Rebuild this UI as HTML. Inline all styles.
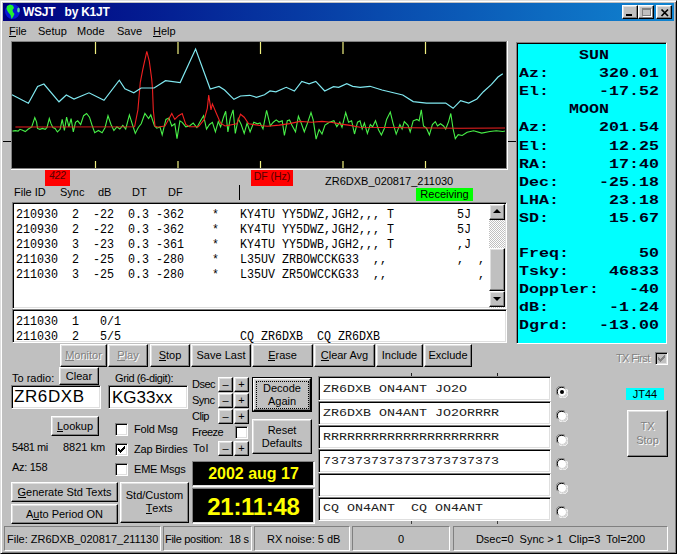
<!DOCTYPE html>
<html><head><meta charset="utf-8"><style>
*{box-sizing:border-box}
html,body{margin:0;padding:0}
body{width:677px;height:554px;overflow:hidden;background:#c0c0c0;font-family:"Liberation Sans",sans-serif;font-size:11px;color:#000;position:relative}
.a{position:absolute;white-space:pre}
.bt{position:absolute;background:#c0c0c0;border:1px solid;border-color:#fff #000 #000 #fff;box-shadow:inset -1px -1px #808080,inset 1px 1px #dfdfdf;text-align:center;white-space:pre;line-height:13px}
.sk{position:absolute;background:#fff;border:1px solid;border-color:#808080 #fff #fff #808080;box-shadow:inset 1px 1px #000,inset -1px -1px #dfdfdf}
.dis{color:#808080;text-shadow:1px 1px #fff}
.mono{font-family:"Liberation Mono",monospace}
u{text-decoration:none;border-bottom:1px solid currentColor;line-height:10px;display:inline-block}
.cb{position:absolute;width:13px;height:13px;background:#fff;border:1px solid;border-color:#808080 #fff #fff #808080;box-shadow:inset 1px 1px #000,inset -1px -1px #dfdfdf}
.sp{position:absolute;border:1px solid;border-color:#808080 #fff #fff #808080;line-height:24px;padding-left:4px;white-space:pre}
</style></head><body>
<!-- window frame -->
<div class="a" style="left:0;top:0;width:677px;height:554px;border:1px solid;border-color:#dfdfdf #000 #000 #dfdfdf;box-shadow:inset 1px 1px #fff,inset -1px -1px #808080"></div>
<!-- title bar -->
<div class="a" style="left:3px;top:3px;width:671px;height:18px;background:linear-gradient(to right,#000080,#1084d0)"></div>
<svg class="a" style="left:5px;top:4px" width="16" height="16" viewBox="0 0 16 16">
<circle cx="7.5" cy="7.5" r="7.5" fill="#0818d8"/>
<path d="M2 2 L5 0.5 L8 1.5 L9 4 L7.5 6 L8 8 L9.5 10 L8 13 L6.5 15 L5.5 11 L3 8 L1.5 5 Z" fill="#20f030"/>
<ellipse cx="13.5" cy="6" rx="1.3" ry="2.6" fill="#60d8a0"/>
</svg>
<div class="a" style="left:23px;top:5px;font-weight:bold;font-size:12px;line-height:15px;color:#fff;letter-spacing:-0.25px">WSJT   by K1JT</div>
<div class="bt" style="left:622px;top:5px;width:16px;height:14px"><div class="a" style="left:3px;top:8px;width:6px;height:2px;background:#000"></div></div>
<div class="bt" style="left:638px;top:5px;width:16px;height:14px"><div class="a" style="left:3px;top:2px;width:9px;height:8px;border:1px solid #808080;border-top-width:2px;box-shadow:1px 1px #fff"></div></div>
<div class="bt" style="left:656px;top:5px;width:16px;height:14px"><svg class="a" style="left:2px;top:2px" width="11" height="9"><path d="M2.5 1.5L9 8M9 1.5L2.5 8" stroke="#000" stroke-width="1.7"/></svg></div>
<!-- menu -->
<div class="a" style="left:9px;top:25px;line-height:13px"><u>F</u>ile</div>
<div class="a" style="left:38px;top:25px;line-height:13px">Setup</div>
<div class="a" style="left:77px;top:25px;line-height:13px">Mode</div>
<div class="a" style="left:117px;top:25px;line-height:13px">Save</div>
<div class="a" style="left:153px;top:25px;line-height:13px"><u>H</u>elp</div>
<!-- plot -->
<svg class="a" style="left:11px;top:41px" width="497" height="129" viewBox="11 41 497 129">
<rect x="11" y="41" width="497" height="129" fill="#fff"/>
<rect x="11" y="41" width="496" height="128" fill="#808080"/>
<rect x="12" y="42" width="494" height="126" fill="#000"/>
<g stroke="#f0f080" stroke-width="1.2">
<path d="M95.5 42v12M178 42v12M260.5 42v12M343 42v12M425.5 42v12M95.5 161v7M178 161v7M260.5 161v7M343 161v7M425.5 161v7"/>
</g>
<polyline fill="none" stroke="#48f048" stroke-width="1.1" points="12.5,131.1 15.4,130.6 18.1,131.1 19.9,129.3 22.6,130.2 25.3,131.6 28.0,129.3 31.7,127.0 34.8,117.6 36.6,122.1 37.5,128.4 39.8,129.3 42.5,128.4 45.2,129.3 47.0,127.5 49.3,118.5 51.1,123.9 52.9,127.5 55.1,128.4 57.4,132.0 60.1,129.3 62.2,119.4 64.4,130.5 66.6,117.2 68.9,126.8 71.1,118.6 73.3,131.9 75.5,122.3 77.7,120.8 80.7,124.5 83.6,115.7 86.6,113.5 89.5,117.2 91.8,124.5 94.7,132.7 98.4,130.5 102.1,132.7 105.1,127.5 108.0,115.7 111.0,124.5 113.9,130.5 116.9,126.8 119.8,129.0 122.8,125.3 125.7,129.0 129.4,114.9 132.4,124.5 135.3,133.4 138.3,127.5 141.2,123.8 144.9,113.5 148.6,118.6 150.8,114.9 154.5,126.0 156.8,128.2 160.0,127.0 162.2,134.9 165.9,119.4 168.9,117.9 171.8,126.0 174.8,123.8 177.0,138.6 179.9,120.8 182.2,122.3 185.8,126.8 189.5,126.0 193.2,123.1 196.9,127.5 200.6,120.8 203.6,115.7 206.5,129.0 209.5,124.5 212.4,122.3 215.4,131.9 218.3,121.6 220.6,126.8 223.5,117.2 225.7,111.2 227.9,131.9 230.2,118.6 233.1,109.8 235.3,133.4 238.3,118.6 241.2,124.5 244.2,133.4 247.1,123.1 250.1,131.9 253.8,122.3 257.5,123.8 260.0,123.0 263.0,128.8 266.6,110.3 270.3,125.9 273.3,122.2 276.2,119.9 279.0,122.0 282.2,120.7 284.4,135.5 287.3,120.7 289.5,120.0 291.8,125.1 295.5,131.8 298.4,116.2 301.4,123.6 304.3,131.8 307.3,123.6 311.0,112.6 313.2,119.9 316.1,139.1 319.1,129.5 322.0,134.0 325.0,125.1 329.4,122.2 333.9,120.7 336.8,126.6 339.8,122.2 342.0,127.3 345.7,112.6 348.6,122.2 351.6,120.7 354.5,134.0 357.5,122.2 360.0,120.8 362.2,129.0 364.4,123.1 367.4,133.4 370.3,124.5 372.6,126.8 375.5,120.8 378.5,129.7 381.4,134.9 384.4,128.2 386.6,119.4 390.3,112.0 393.2,123.8 396.2,134.1 399.9,124.5 402.1,129.0 404.3,121.6 408.0,125.3 410.2,131.9 413.2,120.8 416.9,119.4 419.1,120.8 421.3,109.8 423.5,126.0 426.5,128.2 429.4,134.9 432.4,124.5 435.3,121.6 437.5,126.0 440.5,123.8 443.5,126.0 445.7,129.0 448.6,121.6 450.8,113.5 453.1,129.0 455.3,138.6 458.2,134.7 462.2,135.5 467.1,132.3 473.6,130.7 481.7,133.1 489.9,131.5 496.3,130.7 502.8,131.5 505.0,131.0"/>
<polyline fill="none" stroke="#f02020" stroke-width="1.1" points="15.4,127.0 134.6,126.8 137.9,109.9 140.3,82.3 142.8,69.3 146.8,51.4 149.3,61.1 151.7,79.0 152.5,88.8 153.3,110.0 155.0,126.2 157.5,127.0 160.0,126.8 165.0,126.0 171.8,113.5 174.8,119.4 178.5,115.7 182.2,113.5 185.8,124.5 189.5,126.8 198.4,126.8 204.3,119.4 207.3,108.3 208.7,95.0 211.0,109.8 212.4,103.9 216.1,112.7 220.6,123.1 225.0,126.0 236.8,123.8 240.5,114.2 244.2,117.2 248.6,123.8 260.0,125.5 267.4,126.3 279.2,125.1 289.5,123.6 299.9,121.4 311.7,122.2 322.0,121.4 330.9,122.2 342.7,124.4 348.6,125.1 360.0,127.3 460.0,128.2 505.0,128.0"/>
<polyline fill="none" stroke="#80e8f0" stroke-width="1.2" points="12.0,94.8 28.4,103.2 37.6,86.5 43.9,84.0 59.0,101.8 66.3,95.0 74.0,99.0 89.0,92.8 104.0,100.3 119.3,80.2 124.9,88.8 133.8,92.8 141.1,88.0 154.1,88.0 165.5,80.7 180.2,82.6 195.6,49.0 210.2,89.0 219.0,86.5 224.6,90.0 233.9,99.3 240.5,96.0 249.8,95.3 256.5,97.3 264.5,94.7 270.0,91.0 275.9,91.8 286.2,87.3 294.4,91.0 301.8,81.4 309.1,83.9 315.8,81.4 324.7,91.0 333.5,86.6 338.7,87.3 346.8,83.6 352.7,86.3 360.1,87.3 370.0,86.3 382.0,90.0 402.8,95.0 413.2,101.6 426.5,103.1 445.7,103.1 453.1,108.3 460.6,100.6 468.7,103.0 476.9,99.0 483.4,91.7 491.5,84.4 498.0,77.0 502.8,73.8"/>
</svg>
<div class="a" style="left:3px;top:141px;width:8px;height:1px;background:#000"></div>
<div class="a" style="left:508px;top:141px;width:8px;height:1px;background:#000"></div>
<!-- labels under plot -->
<div class="a" style="left:45px;top:170px;width:25px;height:16px;background:#ff0000;color:#500;text-align:center;line-height:11px;font-size:10px;font-style:italic">422</div>
<div class="a" style="left:251px;top:170px;width:42px;height:16px;background:#ff0000;color:#500;text-align:center;line-height:12px;font-size:10.5px">DF (Hz)</div>
<div class="a" style="left:325px;top:175px;line-height:13px">ZR6DXB_020817_211030</div>
<div class="a" style="left:416px;top:188px;width:57px;height:13px;background:#00ff00;text-align:center;line-height:13px">Receiving</div>
<div class="a" style="left:14px;top:186px;line-height:13px">File ID</div>
<div class="a" style="left:60px;top:186px;line-height:13px">Sync</div>
<div class="a" style="left:98px;top:186px;line-height:13px">dB</div>
<div class="a" style="left:132px;top:186px;line-height:13px">DT</div>
<div class="a" style="left:168px;top:186px;line-height:13px">DF</div>
<div class="a" style="left:239px;top:185px;width:1px;height:15px;background:#000"></div>
<!-- listbox 1 -->
<div class="sk" style="left:12px;top:202px;width:495px;height:107px"></div>
<div class="a mono" style="left:16px;top:208px;font-size:12.5px;line-height:15px;transform:scaleX(0.93333);transform-origin:0 0">210930  2  -22  0.3 -362    *   KY4TU YY5DWZ,JGH2,,, T         5J
210930  2  -22  0.3 -362    *   KY4TU YY5DWZ,JGH2,,, T         5J
210930  3  -23  0.3 -361    *   KY4TU YY5DWB,JGH2,,, T         ,J
211030  2  -25  0.3 -280    *   L35UV ZRBOWCCKG33  ,,          ,  ,
211030  3  -25  0.3 -280    *   L35UV ZR5OWCCKG33  ,,             ,</div>
<!-- scrollbar -->
<div class="a" style="left:489px;top:204px;width:16px;height:104px;background:repeating-conic-gradient(#c0c0c0 0 25%,#fff 0 50%) 0 0/2px 2px"></div>
<div class="bt" style="left:489px;top:204px;width:16px;height:16px"><div class="a" style="left:3px;top:4px;width:0;height:0;border-left:4px solid transparent;border-right:4px solid transparent;border-bottom:4px solid #000"></div></div>
<div class="bt" style="left:489px;top:248px;width:16px;height:43px"></div>
<div class="bt" style="left:489px;top:291px;width:16px;height:16px"><div class="a" style="left:3px;top:5px;width:0;height:0;border-left:4px solid transparent;border-right:4px solid transparent;border-top:4px solid #000"></div></div>
<!-- listbox 2 -->
<div class="sk" style="left:12px;top:309px;width:495px;height:34px"></div>
<div class="a mono" style="left:16px;top:315px;font-size:12.5px;line-height:15px;transform:scaleX(0.93333);transform-origin:0 0">211030  1   0/1
211030  2   5/5                 CQ ZR6DXB  CQ ZR6DXB</div>
<!-- cyan panel -->
<div class="a" style="left:516px;top:42px;width:151px;height:302px;background:#00ffff;border:1px solid;border-color:#808080 #fff #fff #808080;box-shadow:inset 1px 1px #000"></div>
<div class="a mono" style="left:519px;top:47px;font-size:16.667px;letter-spacing:0;line-height:21.95px;font-weight:bold;color:#000018;transform:scaleY(0.82);transform-origin:0 0">      SUN
Az:     320.01
El:     -17.52
     MOON
Az:     201.54
El:      12.25
RA:      17:40
Dec:    -25.18
LHA:     23.18
SD:      15.67

Freq:       50
Tsky:    46833
Doppler:   -40
dB:      -1.24
Dgrd:   -13.00</div>
<!-- button row -->
<div class="bt dis" style="left:60px;top:344px;width:47px;height:23px;line-height:21px"><u>M</u>onitor</div>
<div class="bt dis" style="left:108px;top:344px;width:40px;height:23px;line-height:21px"><u>P</u>lay</div>
<div class="bt" style="left:150px;top:344px;width:40px;height:23px;line-height:21px"><u>S</u>top</div>
<div class="bt" style="left:191px;top:344px;width:60px;height:23px;line-height:21px">Save Last</div>
<div class="bt" style="left:252px;top:344px;width:61px;height:23px;line-height:21px"><u>E</u>rase</div>
<div class="bt" style="left:314px;top:344px;width:61px;height:23px;line-height:21px"><u>C</u>lear Avg</div>
<div class="bt" style="left:376px;top:344px;width:47px;height:23px;line-height:21px">Include</div>
<div class="bt" style="left:424px;top:344px;width:48px;height:23px;line-height:21px">Exclude</div>
<!-- TX first -->
<div class="a dis" style="left:616px;top:352px;line-height:13px;letter-spacing:-0.6px">TX First</div>
<div class="cb" style="left:655px;top:352px;background:#c0c0c0"><svg class="a" style="left:2px;top:2px" width="7" height="7" shape-rendering="crispEdges"><path d="M0 2h1v3h-1zM1 3h1v3h-1zM2 4h1v3h-1zM3 3h1v3h-1zM4 2h1v3h-1zM5 1h1v3h-1zM6 0h1v3h-1z" fill="#808080"/></svg></div>
<!-- To radio -->
<div class="a" style="left:12px;top:372px;line-height:13px">To radio:</div>
<div class="bt" style="left:59px;top:367px;width:40px;height:18px;line-height:16px">Clear</div>
<div class="sk" style="left:11px;top:385px;width:90px;height:24px"></div>
<div class="a" style="left:14px;top:387px;font-size:17px;line-height:20px;letter-spacing:0.6px">ZR6DXB</div>
<div class="a" style="left:115px;top:372px;line-height:13px;letter-spacing:-0.4px">Grid (6-digit):</div>
<div class="sk" style="left:108px;top:385px;width:80px;height:24px"></div>
<div class="a" style="left:112px;top:388px;font-size:17px;line-height:20px">KG33xx</div>
<!-- Dsec etc -->
<div class="a" style="left:192px;top:377px;line-height:14px;letter-spacing:-0.5px">Dsec</div>
<div class="a" style="left:192px;top:393px;line-height:14px;letter-spacing:-0.5px">Sync</div>
<div class="a" style="left:192px;top:409px;line-height:14px;letter-spacing:-0.5px">Clip</div>
<div class="a" style="left:192px;top:425px;line-height:14px;letter-spacing:-0.5px">Freeze</div>
<div class="a" style="left:193px;top:441px;line-height:14px;letter-spacing:0.6px">Tol</div>
<div class="bt" style="left:218px;top:377px;width:15px;height:15px;line-height:13px">&#x2013;</div>
<div class="bt" style="left:234px;top:377px;width:15px;height:15px;line-height:13px">+</div>
<div class="bt" style="left:218px;top:393px;width:15px;height:15px;line-height:13px">&#x2013;</div>
<div class="bt" style="left:234px;top:393px;width:15px;height:15px;line-height:13px">+</div>
<div class="bt" style="left:218px;top:409px;width:15px;height:15px;line-height:13px">&#x2013;</div>
<div class="bt" style="left:234px;top:409px;width:15px;height:15px;line-height:13px">+</div>
<div class="cb" style="left:235px;top:426px"></div>
<div class="bt" style="left:218px;top:441px;width:15px;height:15px;line-height:13px">&#x2013;</div>
<div class="bt" style="left:234px;top:441px;width:15px;height:15px;line-height:13px">+</div>
<div class="a" style="left:252px;top:377px;width:60px;height:35px;border:1px solid #000"></div>
<div class="bt" style="left:253px;top:378px;width:58px;height:33px;line-height:13px;padding-top:3px">Decode
Again</div>
<div class="a" style="left:256px;top:381px;width:53px;height:28px;border:1px dotted #000"></div>
<div class="bt" style="left:252px;top:419px;width:60px;height:35px;line-height:13px;padding-top:4px">Reset
Defaults</div>
<!-- lookup etc -->
<div class="bt" style="left:51px;top:416px;width:48px;height:20px;line-height:18px"><u>L</u>ookup</div>
<div class="a" style="left:12px;top:441px;line-height:13px;letter-spacing:-0.5px">5481 mi</div>
<div class="a" style="left:63px;top:441px;line-height:13px">8821 km</div>
<div class="a" style="left:12px;top:461px;line-height:13px;letter-spacing:-0.3px">Az: 158</div>
<div class="cb" style="left:115px;top:423px"></div>
<div class="a" style="left:134px;top:423px;line-height:13px;letter-spacing:-0.2px">Fold Msg</div>
<div class="cb" style="left:115px;top:443px"><svg class="a" style="left:2px;top:2px" width="7" height="7" shape-rendering="crispEdges"><path d="M0 2h1v3h-1zM1 3h1v3h-1zM2 4h1v3h-1zM3 3h1v3h-1zM4 2h1v3h-1zM5 1h1v3h-1zM6 0h1v3h-1z" fill="#000"/></svg></div>
<div class="a" style="left:134px;top:443px;line-height:13px;letter-spacing:-0.2px">Zap Birdies</div>
<div class="cb" style="left:115px;top:463px"></div>
<div class="a" style="left:134px;top:463px;line-height:13px;letter-spacing:-0.2px">EME Msgs</div>
<div class="bt" style="left:11px;top:482px;width:107px;height:20px;line-height:18px"><u>G</u>enerate Std Texts</div>
<div class="bt" style="left:11px;top:504px;width:107px;height:20px;line-height:18px">A<u>u</u>to Period ON</div>
<div class="bt" style="left:120px;top:482px;width:69px;height:41px;line-height:13px;padding-top:6px">Std/Custom
   <u>T</u>exts</div>
<!-- clocks -->
<div class="a" style="left:192px;top:461px;width:123px;height:26px;background:#000;border:1px solid;border-color:#808080 #fff #fff #808080;box-shadow:inset -1px -1px #dfdfdf;color:#ffff00;font-weight:bold;font-size:16px;line-height:24px;text-align:center">2002 aug 17</div>
<div class="a" style="left:192px;top:488px;width:123px;height:36px;background:#000;border:1px solid;border-color:#808080 #fff #fff #808080;box-shadow:inset -1px -1px #dfdfdf;color:#ffff00;font-weight:bold;font-size:24px;line-height:36px;letter-spacing:-0.3px;text-align:center">21:11:48</div>
<!-- text boxes -->
<div class="sk" style="left:318px;top:376px;width:233px;height:25px"></div>
<div class="sk" style="left:318px;top:401px;width:233px;height:24px"></div>
<div class="sk" style="left:318px;top:425px;width:233px;height:24px"></div>
<div class="sk" style="left:318px;top:449px;width:233px;height:24px"></div>
<div class="sk" style="left:318px;top:473px;width:233px;height:24px"></div>
<div class="sk" style="left:318px;top:497px;width:233px;height:24px"></div>
<div class="a mono" style="left:323px;top:377px;font-size:13.333px;line-height:29.268px;transform:scaleY(0.82);transform-origin:0 0;color:#202020">ZR6DXB ON4ANT JO2O
ZR6DXB ON4ANT JO2ORRRR
RRRRRRRRRRRRRRRRRRRRRR
7373737373737373737373

CQ ON4ANT  CQ ON4ANT</div>
<!-- radios -->
<svg class="a" style="left:556px;top:386px" width="12" height="12" viewBox="0 0 12 12"><path d="M1.5 9 A5 5 0 0 1 9 1.5" stroke="#808080" fill="none" stroke-width="1"/><path d="M2.5 8.5 A4 4 0 0 1 8.5 2.5" stroke="#000" fill="none"/><circle cx="6" cy="6" r="4" fill="#fff"/><path d="M10.5 3 A5 5 0 0 1 3 10.5" stroke="#fff" fill="none"/><path d="M9.5 3.5 A4 4 0 0 1 3.5 9.5" stroke="#dfdfdf" fill="none"/><circle cx="6" cy="6" r="2" fill="#000"/></svg>
<svg class="a" style="left:556px;top:410px" width="12" height="12" viewBox="0 0 12 12"><path d="M1.5 9 A5 5 0 0 1 9 1.5" stroke="#808080" fill="none" stroke-width="1"/><path d="M2.5 8.5 A4 4 0 0 1 8.5 2.5" stroke="#000" fill="none"/><circle cx="6" cy="6" r="4" fill="#fff"/><path d="M10.5 3 A5 5 0 0 1 3 10.5" stroke="#fff" fill="none"/><path d="M9.5 3.5 A4 4 0 0 1 3.5 9.5" stroke="#dfdfdf" fill="none"/></svg>
<svg class="a" style="left:556px;top:434px" width="12" height="12" viewBox="0 0 12 12"><path d="M1.5 9 A5 5 0 0 1 9 1.5" stroke="#808080" fill="none" stroke-width="1"/><path d="M2.5 8.5 A4 4 0 0 1 8.5 2.5" stroke="#000" fill="none"/><circle cx="6" cy="6" r="4" fill="#fff"/><path d="M10.5 3 A5 5 0 0 1 3 10.5" stroke="#fff" fill="none"/><path d="M9.5 3.5 A4 4 0 0 1 3.5 9.5" stroke="#dfdfdf" fill="none"/></svg>
<svg class="a" style="left:556px;top:458px" width="12" height="12" viewBox="0 0 12 12"><path d="M1.5 9 A5 5 0 0 1 9 1.5" stroke="#808080" fill="none" stroke-width="1"/><path d="M2.5 8.5 A4 4 0 0 1 8.5 2.5" stroke="#000" fill="none"/><circle cx="6" cy="6" r="4" fill="#fff"/><path d="M10.5 3 A5 5 0 0 1 3 10.5" stroke="#fff" fill="none"/><path d="M9.5 3.5 A4 4 0 0 1 3.5 9.5" stroke="#dfdfdf" fill="none"/></svg>
<svg class="a" style="left:556px;top:482px" width="12" height="12" viewBox="0 0 12 12"><path d="M1.5 9 A5 5 0 0 1 9 1.5" stroke="#808080" fill="none" stroke-width="1"/><path d="M2.5 8.5 A4 4 0 0 1 8.5 2.5" stroke="#000" fill="none"/><circle cx="6" cy="6" r="4" fill="#fff"/><path d="M10.5 3 A5 5 0 0 1 3 10.5" stroke="#fff" fill="none"/><path d="M9.5 3.5 A4 4 0 0 1 3.5 9.5" stroke="#dfdfdf" fill="none"/></svg>
<svg class="a" style="left:556px;top:506px" width="12" height="12" viewBox="0 0 12 12"><path d="M1.5 9 A5 5 0 0 1 9 1.5" stroke="#808080" fill="none" stroke-width="1"/><path d="M2.5 8.5 A4 4 0 0 1 8.5 2.5" stroke="#000" fill="none"/><circle cx="6" cy="6" r="4" fill="#fff"/><path d="M10.5 3 A5 5 0 0 1 3 10.5" stroke="#fff" fill="none"/><path d="M9.5 3.5 A4 4 0 0 1 3.5 9.5" stroke="#dfdfdf" fill="none"/></svg>
<div class="a" style="left:626px;top:388px;width:38px;height:12px;background:#00ffff;text-align:center;line-height:13px">JT44</div>
<div class="bt dis" style="left:627px;top:410px;width:41px;height:47px;line-height:14px;padding-top:8px">TX
Stop</div>
<!-- ticks -->
<div class="a" style="left:411px;top:373px;width:1px;height:3px;background:#202020"></div>
<div class="a" style="left:497px;top:373px;width:1px;height:3px;background:#202020"></div>
<div class="a" style="left:411px;top:521px;width:1px;height:3px;background:#404040"></div>
<div class="a" style="left:497px;top:521px;width:1px;height:3px;background:#404040"></div>
<!-- status bar -->
<div class="sp" style="left:4px;top:526px;width:157px;height:25px;padding-left:2px">File: ZR6DXB_020817_211130</div>
<div class="sp" style="left:163px;top:526px;width:89px;height:25px;padding-left:1px;letter-spacing:-0.3px">File position:<span class="a" style="left:65px;top:0">18 s</span></div>
<div class="sp" style="left:254px;top:526px;width:96px;height:25px;padding-left:12px">RX noise: 5 dB</div>
<div class="sp" style="left:352px;top:526px;width:98px;height:25px;text-align:center;padding:0">0</div>
<div class="sp" style="left:453px;top:526px;width:215px;height:25px;text-align:center;padding:0">Dsec=0  Sync &gt; 1  Clip=3  Tol=200</div>
</body></html>
